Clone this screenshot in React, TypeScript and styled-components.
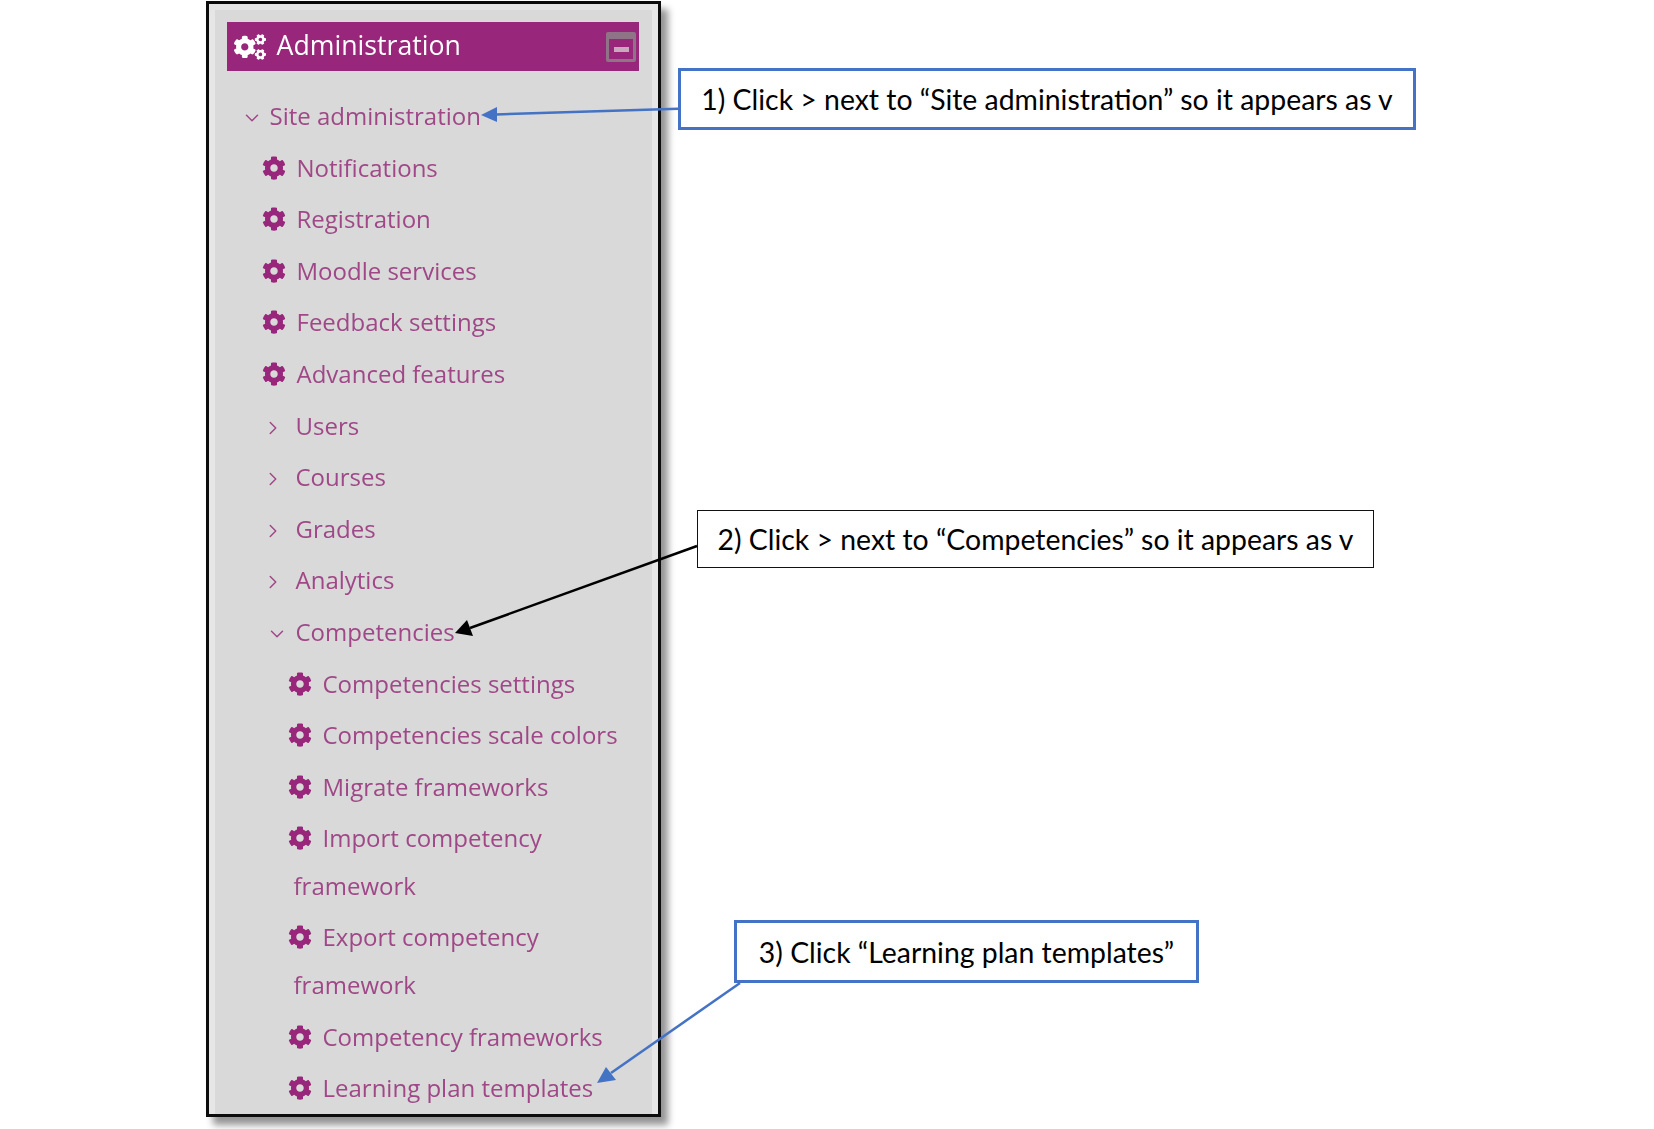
import * as React from 'react';
import styled, { createGlobalStyle } from 'styled-components';
import { FaCog, FaCogs } from 'react-icons/fa';
import { ChevronDown, ChevronRight } from 'lucide-react';

const purple = '#98267a';
const linkColor = '#9f4787';

const GlobalStyle = createGlobalStyle`
  html, body {
    margin: 0;
    padding: 0;
    background: #fff;
  }
`;

const Page = styled.div`
  position: relative;
  width: 1654px;
  height: 1129px;
  overflow: hidden;
  display: flex;
  align-items: flex-start;
  padding-left: 206px;
  box-sizing: border-box;
  background: #fff;
`;

const Panel = styled.div`
  width: 455px;
  margin-top: 1px;
  box-sizing: border-box;
  border: 3px solid #0c0c0c;
  box-shadow: 7px 8px 7px rgba(0, 0, 0, 0.42);
  background: #d9d9d9;
`;

const Frame = styled.div`
  border: solid #e6e6e6;
  border-width: 6px 6px 0 6px;
  padding: 12px 13px 0 12px;
`;

const Header = styled.div`
  height: 49px;
  background: ${purple};
  display: flex;
  align-items: center;
  color: #fff;
  font: 400 26.7px 'Open Sans', sans-serif;
  padding: 0 3px 0 7px;
`;

const HeaderTitle = styled.span`
  margin: -4px 0 0 10.5px;
  flex: 1;
  filter: blur(0.3px);
`;

const HeaderIcon = styled(FaCogs)`
  font-size: 32px;
  filter: blur(0.6px);
`;

const CollapseButton = styled.div`
  width: 30px;
  height: 30px;
  box-sizing: border-box;
  border: 3px solid #8f7488;
  border-top-width: 7px;
  border-radius: 2px;
  display: flex;
  align-items: center;
  justify-content: center;
  margin-top: 1px;
  filter: blur(0.4px);

  &::before {
    content: '';
    width: 15px;
    height: 5px;
    background: #c9a9bf;
  }
`;

const Tree = styled.ul`
  list-style: none;
  margin: 19px 0 0;
  padding: 0 15px 0 0;
`;

const Row = styled.li<{ $indent: number }>`
  padding: 2.05px 0 2.05px ${(p) => p.$indent}px;
  font: 400 24px/47.5px 'Open Sans', sans-serif;
  color: ${linkColor};
  filter: blur(0.4px);
`;

const GearIcon = styled(FaCog)`
  color: ${purple};
  font-size: 24px;
  margin-left: -6px;
  margin-right: 11px;
  vertical-align: -3px;
`;

const ChevronSlot = styled.span<{ $gap: number }>`
  display: inline-block;
  width: ${(p) => p.$gap * 2}px;
  margin-left: -${(p) => p.$gap * 2}px;
  text-align: center;
  color: ${linkColor};
  svg {
    vertical-align: -4px;
  }
`;

const Callouts = styled.div`
  display: flex;
  flex-direction: column;
  align-items: flex-start;
`;

const Callout = styled.div<{ $left: number; $top: number; $width: number; $height: number; $tone: 'blue' | 'black' }>`
  margin-left: ${(p) => p.$left}px;
  margin-top: ${(p) => p.$top}px;
  width: ${(p) => p.$width}px;
  height: ${(p) => p.$height}px;
  box-sizing: border-box;
  display: flex;
  align-items: center;
  justify-content: center;
  white-space: nowrap;
  color: #000;
  background: #fff;
  border: ${(p) => (p.$tone === 'blue' ? '3px solid #4472c4' : '1.5px solid #111')};
  font: 400 28.4px 'Lato', sans-serif;
`;

const ArrowLayer = styled.svg`
  position: absolute;
  left: 0;
  top: 0;
  pointer-events: none;
`;

type Item = { label: string; kind: 'gear' | 'open' | 'closed'; indent: number; gap?: number };

const items: Item[] = [
  { label: 'Site administration', kind: 'open', indent: 269.5, gap: 18 },
  { label: 'Notifications', kind: 'gear', indent: 267.5 },
  { label: 'Registration', kind: 'gear', indent: 267.5 },
  { label: 'Moodle services', kind: 'gear', indent: 267.5 },
  { label: 'Feedback settings', kind: 'gear', indent: 267.5 },
  { label: 'Advanced features', kind: 'gear', indent: 267.5 },
  { label: 'Users', kind: 'closed', indent: 295.5, gap: 22.5 },
  { label: 'Courses', kind: 'closed', indent: 295.5, gap: 22.5 },
  { label: 'Grades', kind: 'closed', indent: 295.5, gap: 22.5 },
  { label: 'Analytics', kind: 'closed', indent: 295.5, gap: 22.5 },
  { label: 'Competencies', kind: 'open', indent: 295.5, gap: 19 },
  { label: 'Competencies settings', kind: 'gear', indent: 293.5 },
  { label: 'Competencies scale colors', kind: 'gear', indent: 293.5 },
  { label: 'Migrate frameworks', kind: 'gear', indent: 293.5 },
  { label: 'Import competency framework', kind: 'gear', indent: 293.5 },
  { label: 'Export competency framework', kind: 'gear', indent: 293.5 },
  { label: 'Competency frameworks', kind: 'gear', indent: 293.5 },
  { label: 'Learning plan templates', kind: 'gear', indent: 293.5 },
];

const treeLeft = 206 + 3 + 6 + 12;

const App: React.FC = () => (
  <Page>
    <GlobalStyle />
    <Panel>
      <Frame>
        <Header>
          <HeaderIcon />
          <HeaderTitle>Administration</HeaderTitle>
          <CollapseButton />
        </Header>
        <Tree>
          {items.map((item) => (
            <Row key={item.label} $indent={item.indent - treeLeft}>
              {item.kind === 'gear' && <GearIcon />}
              {item.kind !== 'gear' && (
                <ChevronSlot $gap={item.gap ?? 20}>
                  {item.kind === 'open' ? (
                    <ChevronDown size={22} strokeWidth={1.6} />
                  ) : (
                    <ChevronRight size={22} strokeWidth={1.6} />
                  )}
                </ChevronSlot>
              )}
              {item.label}
            </Row>
          ))}
        </Tree>
      </Frame>
    </Panel>
    <Callouts>
      <Callout $left={17} $top={68} $width={738} $height={62} $tone="blue">
        1) Click &gt; next to “Site administration” so it appears as v
      </Callout>
      <Callout $left={36} $top={380} $width={677} $height={58} $tone="black">
        2) Click &gt; next to “Competencies” so it appears as v
      </Callout>
      <Callout $left={73} $top={352} $width={465} $height={63} $tone="blue">
        3) Click “Learning plan templates”
      </Callout>
    </Callouts>
    <ArrowLayer width={1654} height={1129}>
      <line x1={678} y1={108.7} x2={496} y2={114.5} stroke="#4472c4" strokeWidth={2.5} />
      <polygon points="481,115 497,107 497,122" fill="#4472c4" />
      <line x1={697} y1={546} x2={470} y2={628} stroke="#000" strokeWidth={2.5} />
      <polygon points="455,633 467,620 473,636" fill="#000" />
      <line x1={740} y1={983} x2={611} y2={1073} stroke="#4472c4" strokeWidth={2.5} />
      <polygon points="597,1083 606,1067 616,1080" fill="#4472c4" />
    </ArrowLayer>
  </Page>
);

export default App;
